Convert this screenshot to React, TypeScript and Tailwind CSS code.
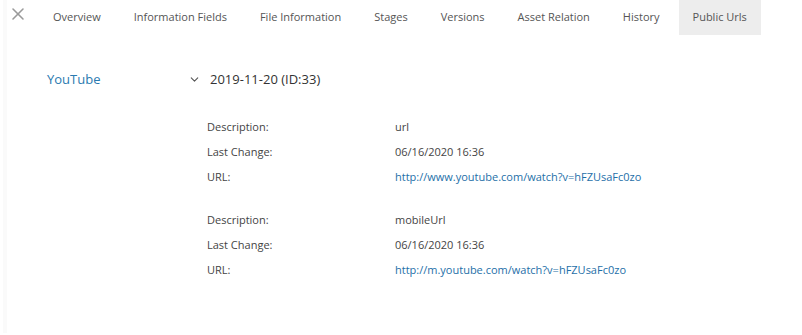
import { ChevronDown, X } from "lucide-react";

const tabs = [
  "Overview",
  "Information Fields",
  "File Information",
  "Stages",
  "Versions",
  "Asset Relation",
  "History",
  "Public Urls",
];

const groups = [
  {
    description: "url",
    lastChange: "06/16/2020 16:36",
    url: "http://www.youtube.com/watch?v=hFZUsaFc0zo",
  },
  {
    description: "mobileUrl",
    lastChange: "06/16/2020 16:36",
    url: "http://m.youtube.com/watch?v=hFZUsaFc0zo",
  },
];

const Row = ({ label, children }: any) => (
  <div className="flex h-[25px] items-center">
    <div className="w-[188px] text-[#444]">{label}</div>
    <div>{children}</div>
  </div>
);

export default function App() {
  return (
    <div
      className="relative h-[335px] w-[802px] bg-white text-[11px]"
      style={{ fontFamily: '"Open Sans", sans-serif' }}
    >
      <div className="absolute left-[3px] top-0 h-[333px] w-[4px] bg-[#fafafa]" />
      <div className="flex h-[35px] items-center">
        <button className="ml-[8px] mr-[11px] flex h-[35px] w-[20px] items-center justify-center pb-[7px] text-[#9a9a9a]">
          <X size={20} strokeWidth={1.9} />
        </button>
        <div className="flex h-full gap-[5px]">
          {tabs.map((t) => (
            <div
              key={t}
              className={`flex h-full items-center px-[14px] pb-[1px] text-[11px] text-[#555] ${
                t === "Public Urls" ? "bg-[#ededed]" : ""
              }`}
            >
              {t}
            </div>
          ))}
        </div>
      </div>

      <div className="mt-[35px] flex items-center text-[13px]">
        <div className="ml-[47px] w-[141px] text-[#2a7ab0]">YouTube</div>
        <ChevronDown size={13} className="text-[#555]" strokeWidth={2} />
        <div className="ml-[9px] text-[#333]">2019-11-20 (ID:33)</div>
      </div>

      <div className="ml-[207px] mt-[25px] flex flex-col gap-[18px]">
        {groups.map((g, i) => (
          <div key={i}>
            <Row label="Description:">
              <span className="text-[#444]">{g.description}</span>
            </Row>
            <Row label="Last Change:">
              <span className="text-[#444]">{g.lastChange}</span>
            </Row>
            <Row label="URL:">
              <span className="text-[#1e6fa8]">{g.url}</span>
            </Row>
          </div>
        ))}
      </div>
    </div>
  );
}
